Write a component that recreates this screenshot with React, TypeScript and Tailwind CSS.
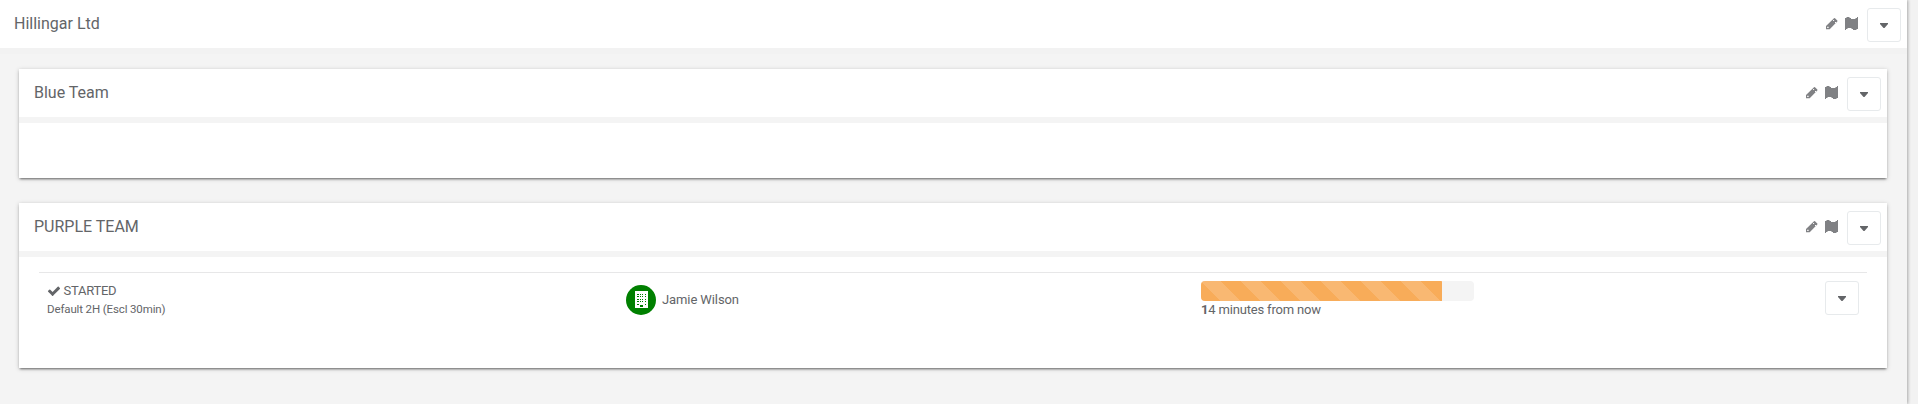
import type { ReactNode } from "react";

const PencilIcon = () => (
  <svg className="h-3 w-3" viewBox="0 0 12 12" fill="currentColor">
    <path
      fillRule="evenodd"
      d="M0 8L8 .3Q8.500-.1 9 .3L11.300 2.600Q11.700 3.100 11.300 3.600L3.700 11.300H0ZM7.100 2v1h1V2zM9 3.900v1h1v-1zM1.200 8.800v1.300h1.400V8.800z"
    />
  </svg>
);

const MapIcon = () => (
  <svg className="h-[13px] w-[13px]" viewBox="0 0 13 13" fill="currentColor">
    <path d="M0 1H1.500V0H4.500V1H6V2H10.500V1H12V0H13V12H11.500V13H8V12H6.500V11H2.500V12H1V13H0Z" />
  </svg>
);

const CheckIcon = () => (
  <svg className="h-3.5 w-3.5" viewBox="0 0 1792 1792" fill="currentColor">
    <path d="M1671 566q0 40-28 68l-724 724-136 136q-28 28-68 28t-68-28l-136-136-362-362q-28-28-28-68t28-68l136-136q28-28 68-28t68 28l294 295 656-657q28-28 68-28t68 28l136 136q28 28 28 68z" />
  </svg>
);

const BuildingIcon = () => (
  <svg className="h-[17px] w-[13px]" viewBox="0 0 13 17" shapeRendering="crispEdges">
    <path fill="#fff" d="M0 0h13v17H0z" />
    <path
      fill="#008000"
      d="M2 3h2v1H2zM5 3h1v1H5zM7 3h1v1H7zM10 3h1v1h-1zM2 5h2v1H2zM5 5h1v1H5zM7 5h1v1H7zM10 5h1v1h-1zM2 8h2v1H2zM5 8h1v1H5zM7 8h1v1H7zM10 8h1v1h-1zM2 10h2v1H2zM5 10h1v1H5zM7 10h1v1H7zM10 10h1v1h-1zM2 13h2v1H2zM10 13h1v1h-1zM5 14h3v2H5z"
    />
  </svg>
);

const DropdownButton = () => (
  <button className="flex h-[34px] w-[34px] items-center justify-center rounded-[3px] border border-[#e7eaec] bg-white">
    <svg className="h-[5px] w-2" viewBox="0 0 8 5" fill="currentColor">
      <path d="M0 0h8v1L4.500 5h-1L0 1z" />
    </svg>
  </button>
);

const PanelHeader = ({ title }: { title: string }) => (
  <div className="flex h-12 items-center justify-between bg-white">
    <h5 className="text-base leading-5">{title}</h5>
    <div className="flex items-center pt-0.5">
      <div className="mr-[9px] flex items-center gap-[7px] pb-[3px] text-[#808184]">
        <PencilIcon />
        <MapIcon />
      </div>
      <DropdownButton />
    </div>
  </div>
);

const TeamCard = ({ title, children }: { title: string; children?: ReactNode }) => (
  <section className="bg-white shadow-[0_2px_2px_-1px_rgba(0,0,0,0.45),0_1px_4px_rgba(0,0,0,0.25)]">
    <div className="pr-[6px] pl-[15px]">
      <PanelHeader title={title} />
    </div>
    <div className="h-[6px] bg-[#f4f4f4]" />
    {children}
  </section>
);

const TaskRow = () => (
  <div className="mx-5 mt-[15px] grid grid-cols-[579px_575px_1fr_auto] border-t border-[#e7e7e8] px-2 pt-2">
    <div className="pt-px">
      <div className="flex items-center gap-[2.5px] text-[13px] leading-[18px] tracking-[-0.25px]">
        <CheckIcon />
        <span>STARTED</span>
      </div>
      <div className="text-[11.5px] leading-[18px] tracking-[-0.13px]">Default 2H (Escl 30min)</div>
    </div>
    <div className="flex h-[37px] items-center gap-[6px] text-[13px] tracking-[-0.1px]">
      <div className="flex h-[30px] w-[30px] items-center justify-center rounded-full bg-[#008000]">
        <BuildingIcon />
      </div>
      <span>Jamie Wilson</span>
    </div>
    <div>
      <div className="h-5 w-[273px] overflow-hidden rounded-[4px] bg-[#f4f4f4]">
        <div className="h-5 w-[241px] bg-[#f8ac59] bg-[linear-gradient(45deg,rgba(255,255,255,0.15)_25%,transparent_25%,transparent_50%,rgba(255,255,255,0.15)_50%,rgba(255,255,255,0.15)_75%,transparent_75%,transparent)] bg-[length:40px_40px]" />
      </div>
      <div className="text-[13px] leading-[18px] tracking-[-0.17px]">
        <b className="font-bold">1</b>4 minutes from now
      </div>
    </div>
    <DropdownButton />
  </div>
);

const App = () => {
  return (
    <div className="h-[404px] overflow-hidden bg-[#f2f2f2] font-['Roboto',sans-serif] text-[#636568]">
      <main className="h-full w-[1907px] bg-[#f4f4f4] shadow-[1px_0_3px_rgba(0,0,0,0.3)]">
        <div className="bg-white pr-[6px] pl-[14px]">
          <PanelHeader title="Hillingar Ltd" />
        </div>
        <div className="h-[6px] bg-[#f2f2f2]" />
        <div className="flex flex-col gap-[25px] pt-[15px] pr-5 pl-[19px]">
          <TeamCard title="Blue Team">
            <div className="h-[55px]" />
          </TeamCard>
          <TeamCard title="PURPLE TEAM">
            <div className="flow-root h-[111px]">
              <TaskRow />
            </div>
          </TeamCard>
        </div>
      </main>
    </div>
  );
};

export default App;
